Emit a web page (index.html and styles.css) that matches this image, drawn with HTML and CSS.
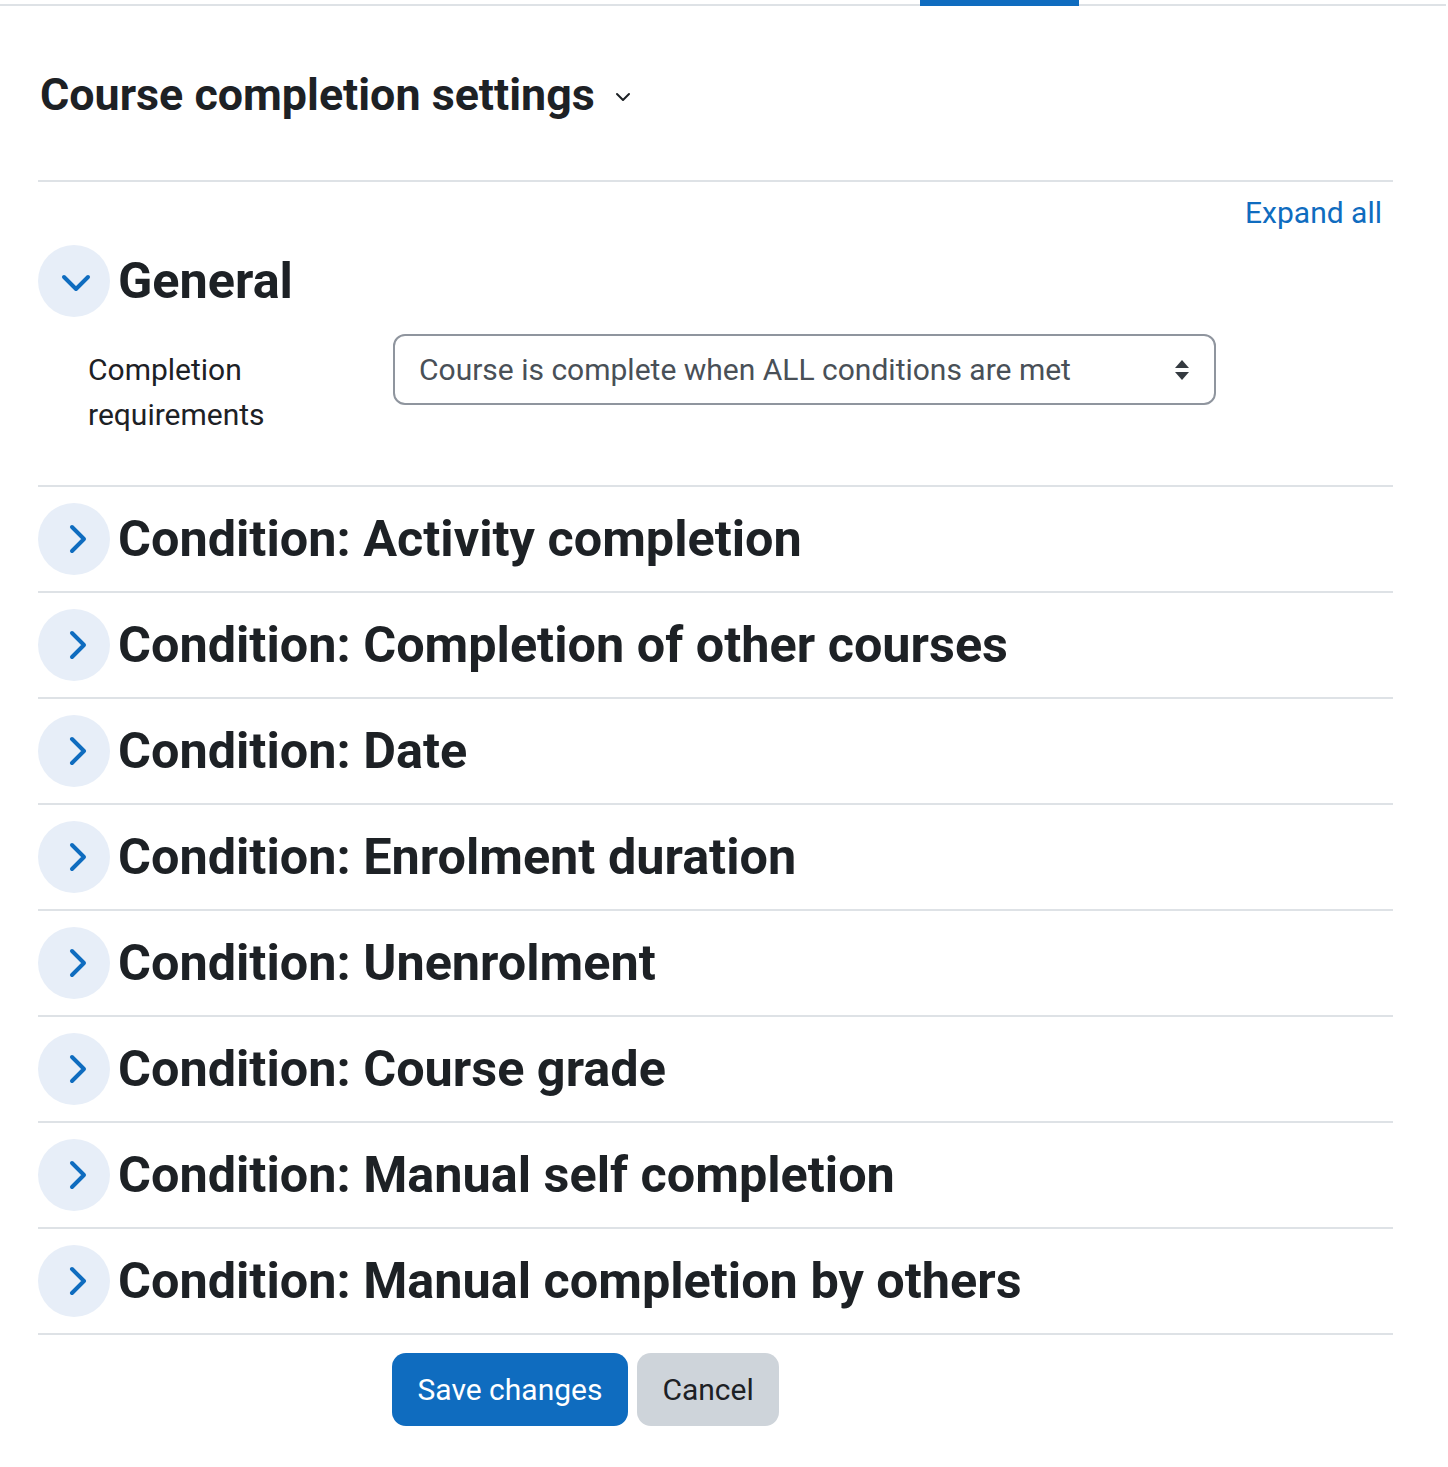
FILE: index.html
```html
<!DOCTYPE html>
<html lang="en">
<head>
    <meta charset="UTF-8">
    <meta name="viewport" content="width=device-width, initial-scale=1.0">
    <title>Course completion settings</title>
    <link rel="stylesheet" href="styles.css">
</head>
<body>
    <div class="tabs-strip">
        <span class="tab-active"></span>
    </div>

    <main class="page">
        <h2 class="page-title">
            Course completion settings
            <svg class="title-caret" width="16" height="12" viewBox="0 0 16 12">
                <path d="M2 3 L8 9 L14 3" fill="none" stroke="#1d2125" stroke-width="2" stroke-linecap="round" stroke-linejoin="round"/>
            </svg>
        </h2>

        <form class="mform">
            <div class="collapsible-actions">
                <a href="#" class="expand-all">Expand all</a>
            </div>

            <fieldset class="section general">
                <div class="section-head">
                    <span class="toggle">
                        <svg width="72" height="72" viewBox="0 0 72 72">
                            <path d="M26 32 L38 44 L50 32" fill="none" stroke="#0f6cbf" stroke-width="4" stroke-linecap="round" stroke-linejoin="round"/>
                        </svg>
                    </span>
                    <h3>General</h3>
                </div>
                <div class="form-row">
                    <label class="form-label">Completion requirements</label>
                    <div class="custom-select">
                        <span>Course is complete when ALL conditions are met</span>
                        <svg width="16" height="22" viewBox="0 0 16 22">
                            <path d="M1 9 L8 1 L15 9 Z" fill="#343a40"/>
                            <path d="M1 13 L15 13 L8 21 Z" fill="#343a40"/>
                        </svg>
                    </div>
                </div>
            </fieldset>

            <div id="conditions"></div>

            <div class="form-buttons">
                <button type="submit" class="btn btn-primary">Save changes</button>
                <button type="button" class="btn btn-secondary">Cancel</button>
            </div>
        </form>
    </main>

    <script>
        const conditions = [
            "Activity completion",
            "Completion of other courses",
            "Date",
            "Enrolment duration",
            "Unenrolment",
            "Course grade",
            "Manual self completion",
            "Manual completion by others"
        ];

        const list = document.getElementById("conditions");
        conditions.forEach(name => {
            const section = document.createElement("fieldset");
            section.className = "section collapsed";
            section.innerHTML = `
                <div class="section-head">
                    <span class="toggle">
                        <svg width="72" height="72" viewBox="0 0 72 72">
                            <path d="M34 24 L46 36 L34 48" fill="none" stroke="#0f6cbf" stroke-width="4" stroke-linecap="round" stroke-linejoin="round"/>
                        </svg>
                    </span>
                    <h3>Condition: ${name}</h3>
                </div>
            `;
            list.appendChild(section);
        });
    </script>
</body>
</html>
```

FILE: styles.css
```css
body {
    margin: 0;
    font-family: Roboto, "Liberation Sans", sans-serif;
    font-size: 30px;
    line-height: 1.5;
    color: #1d2125;
    background: #fff;
}
.tabs-strip {
    height: 4px;
    border-bottom: 2px solid #dee2e6;
    margin-right: 2px;
    position: relative;
}
.tab-active {
    position: absolute;
    left: 920px;
    top: 0;
    width: 159px;
    height: 6px;
    background-color: #0f6cbf;
}
.page {
    padding: 0 55px 40px 38px;
}
.page-title {
    margin: 62px 0 0 0;
    font-size: 44.8px;
    font-weight: 700;
    line-height: 54px;
    display: flex;
    align-items: center;
    height: 54px;
    padding-left: 2px;
}
.title-caret {
    margin-left: 20px;
    margin-top: 4px;
}
.mform {
    margin-top: 58px;
    border-top: 2px solid #dee2e6;
}
.collapsible-actions {
    display: flex;
    justify-content: flex-end;
    padding: 8px 11px 0 0;
}
.expand-all {
    color: #0f6cbf;
    text-decoration: none;
}
.section {
    margin: 0;
    padding: 0;
    border: none;
    min-width: 0;
}
.section-head {
    display: flex;
    align-items: center;
    gap: 8px;
}
.section h3 {
    margin: 0;
    font-size: 50.4px;
    font-weight: 700;
    line-height: 60px;
}
.toggle {
    display: block;
    width: 72px;
    height: 72px;
    border-radius: 50%;
    background-color: #e7eef8;
    flex-shrink: 0;
}
.toggle svg {
    display: block;
}
.general {
    padding-top: 10px;
}
.form-row {
    display: grid;
    grid-template-columns: 355px 823px;
    margin-top: 17px;
    margin-bottom: 48px;
}
.form-label {
    padding: 13px 0 0 50px;
}
.custom-select {
    height: 71px;
    box-sizing: border-box;
    border: 2px solid #8f959e;
    border-radius: 12px;
    display: flex;
    align-items: center;
    justify-content: space-between;
    padding: 0 24px 0 24px;
    color: #495057;
}
.collapsed {
    border-top: 2px solid #dee2e6;
}
.collapsed .section-head {
    height: 104px;
}
#conditions {
    border-bottom: 2px solid #dee2e6;
}
.form-buttons {
    display: flex;
    gap: 9px;
    padding: 18px 0 0 354px;
}
.btn {
    font-family: Roboto, "Liberation Sans", sans-serif;
    font-size: 30px;
    line-height: 45px;
    padding: 13px 24.5px;
    border: 1px solid transparent;
    border-radius: 14px;
    cursor: pointer;
}
.btn-primary {
    background-color: #0f6cbf;
    color: #fff;
}
.btn-secondary {
    background-color: #ced4da;
    color: #1d2125;
}
```
